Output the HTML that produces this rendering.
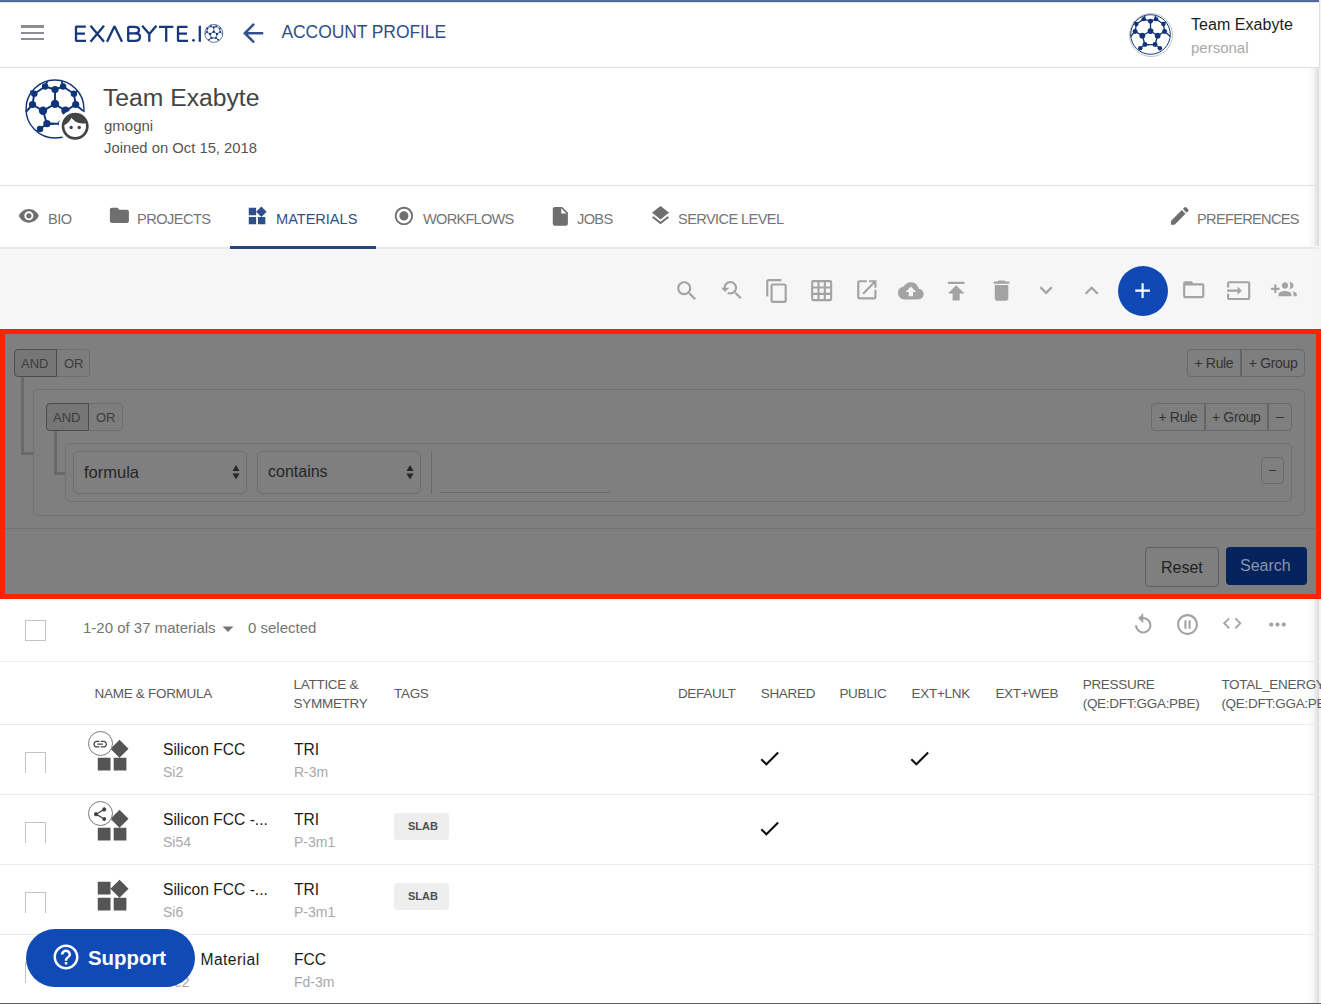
<!DOCTYPE html>
<html><head><meta charset="utf-8">
<style>
*{box-sizing:border-box;margin:0;padding:0}
html,body{width:1321px;height:1004px;overflow:hidden;background:#fff;font-family:"Liberation Sans",sans-serif;position:relative}
.a{position:absolute}
.t{position:absolute;white-space:nowrap;line-height:1}
svg.i{position:absolute;display:block;overflow:visible}
</style></head><body>
<svg width="0" height="0" style="position:absolute"><defs>
<g id="ball">
<g fill="none" stroke="#10347a" stroke-width="3.2" stroke-linecap="butt">
<path d="M50 17.5 L33.5 12.5 L15.5 24.5 L12.5 42.5 L30 53 L50 41.5 L67.5 53 L84.5 42.5 L81.5 24.5 L63.5 12.5 L50 17.5 L50 41.5"/>
<path d="M30 53 L36.5 74.5 L61 74.5 L67.5 53"/>
<path d="M36.5 74.5 L25 83.5 M61 74.5 L73 83.5 M12.5 42.5 L1.5 55 M84.5 42.5 L98.5 55"/>
<path d="M33.5 12.5 L37 4 M63.5 12.5 L61 4 M15.5 24.5 L9 19.5 M81.5 24.5 L88 19.5 M36.5 74.5 L48 74.5"/>
</g>
<g fill="#10347a">
<circle cx="50" cy="17.5" r="6"/><circle cx="33.5" cy="12.5" r="5.4"/><circle cx="63.5" cy="12.5" r="5.4"/>
<circle cx="15.5" cy="24.5" r="5.4"/><circle cx="81.5" cy="24.5" r="5.4"/>
<circle cx="12.5" cy="42.5" r="6"/><circle cx="84.5" cy="42.5" r="6"/>
<circle cx="50" cy="41.5" r="7"/><circle cx="30" cy="53" r="7"/><circle cx="67.5" cy="53" r="7"/>
<circle cx="36.5" cy="74.5" r="6"/><circle cx="61" cy="74.5" r="6"/>
<circle cx="25" cy="83.5" r="5.4"/><circle cx="73" cy="83.5" r="5.4"/>
</g>
<circle cx="50" cy="50" r="48.3" fill="none" stroke="#10347a" stroke-width="2.4"/>
</g>
<g id="ballS">
<g fill="none" stroke="#10347a" stroke-width="3.8" stroke-linecap="butt">
<path d="M50 17.5 L33.5 12.5 L15.5 24.5 L12.5 42.5 L30 53 L50 41.5 L67.5 53 L84.5 42.5 L81.5 24.5 L63.5 12.5 L50 17.5 L50 41.5"/>
<path d="M30 53 L36.5 74.5 L61 74.5 L67.5 53"/>
<path d="M36.5 74.5 L25 83.5 M61 74.5 L73 83.5 M12.5 42.5 L1.5 55 M84.5 42.5 L98.5 55"/>
<path d="M33.5 12.5 L37 4 M63.5 12.5 L61 4 M15.5 24.5 L9 19.5 M81.5 24.5 L88 19.5 M36.5 74.5 L48 74.5"/>
</g>
<g fill="#10347a">
<circle cx="50" cy="17.5" r="5.5"/><circle cx="33.5" cy="12.5" r="5"/><circle cx="63.5" cy="12.5" r="5"/>
<circle cx="15.5" cy="24.5" r="5"/><circle cx="81.5" cy="24.5" r="5"/>
<circle cx="12.5" cy="42.5" r="5.5"/><circle cx="84.5" cy="42.5" r="5.5"/>
<circle cx="50" cy="41.5" r="6.5"/><circle cx="30" cy="53" r="6.5"/><circle cx="67.5" cy="53" r="6.5"/>
<circle cx="36.5" cy="74.5" r="5.5"/><circle cx="61" cy="74.5" r="5.5"/>
<circle cx="25" cy="83.5" r="5"/><circle cx="73" cy="83.5" r="5"/>
</g>
<circle cx="50" cy="50" r="48.3" fill="none" stroke="#10347a" stroke-width="3.6"/>
</g>
</defs></svg>
<div class="a" style="left:0px;top:0px;width:1319px;height:1px;background:#57709b"></div>
<div class="a" style="left:0px;top:1px;width:1319px;height:1px;background:#4a6591"></div>
<div class="a" style="left:0px;top:2px;width:1319px;height:1px;background:#e2e6ee"></div>
<div class="a" style="left:0px;top:67px;width:1319px;height:1px;background:#dbdfe8"></div>
<div class="a" style="left:1319px;top:0px;width:2px;height:1004px;background:#f4f4f4"></div>
<div class="a" style="left:1319px;top:0px;width:1px;height:68px;background:#e0e0e0"></div>
<div class="a" style="left:21px;top:25px;width:23px;height:3px;background:#8a8d91"></div>
<div class="a" style="left:21px;top:32px;width:23px;height:2px;background:#8a8d91"></div>
<div class="a" style="left:21px;top:38px;width:23px;height:2px;background:#8a8d91"></div>
<svg class="i" style="left:70px;top:20px" width="160" height="28" viewBox="0 0 160 28">
<g fill="none" stroke="#17397b" stroke-width="2.3" stroke-linejoin="bevel" stroke-linecap="butt">
<path d="M15.8 6.6 H6 V20.8 H16 M6 13.6 H15"/>
<path d="M20.5 5.8 L34 21.8 M34 5.8 L20.5 21.8"/>
<path d="M37 21.8 L44.5 6.2 L52 21.8"/>
<path d="M58.2 6.8 V20.8 H64.8 C68.3 20.8 70 19 70 16.7 C70 14.4 68.3 13.4 64.8 13.4 H58.2 M64.3 13.4 C67.3 13.4 69 12.2 69 10 C69 7.8 67.3 6.8 64.3 6.8 H58.2"/>
<path d="M72.2 5.8 L79.3 14 L86.4 5.8 M79.3 14 V21.8"/>
<path d="M89 6.8 H103.3 M96.2 6.8 V21.8"/>
<path d="M117.5 6.8 H108 V20.8 H118 M108 13.6 H117"/>
<path d="M129.8 5.8 V21.8"/>
</g>
<circle cx="123.5" cy="20.3" r="1.4" fill="#17397b"/>
<g transform="translate(134.5,4.1) scale(0.186)"><use href="#ballS"/></g>
</svg>
<svg class="i" style="left:237.55px;top:17.75px" width="30.30" height="30.30" viewBox="0 0 24 24"><path fill="#33528d" d="M20 11H7.83l5.59-5.59L12 4l-8 8 8 8 1.41-1.41L7.83 13H20v-2z"/></svg>
<div class="t" style="left:281.5px;top:24px;font-size:17.5px;color:#2f4f8b;letter-spacing:-0.1px">ACCOUNT PROFILE</div>
<div class="a" style="left:1129px;top:13px;width:44px;height:44px;border-radius:50%;border:1px solid #c4c4c4;background:#fff"></div>
<svg class="i" style="left:1130.3px;top:13.8px" width="41" height="41" viewBox="0 0 100 100"><use href="#ball"/></svg>
<div class="t" style="left:1191px;top:17px;font-size:16px;color:#1c1c1c;letter-spacing:0.05px">Team Exabyte</div>
<div class="t" style="left:1191px;top:40px;font-size:15px;color:#a9a9a9;">personal</div>
<div class="a" style="left:1308px;top:68px;width:11px;height:936px;background:linear-gradient(to right,rgba(0,0,0,0),rgba(0,0,0,0.04) 50%,rgba(0,0,0,0.15))"></div>
<svg class="i" style="left:25px;top:79px" width="60" height="60" viewBox="0 0 100 100">
<defs><mask id="fm"><rect x="-5" y="-5" width="110" height="110" fill="#fff"/><circle cx="84" cy="79" r="28" fill="#000"/></mask></defs>
<g mask="url(#fm)"><use href="#ball"/></g></svg>
<svg class="i" style="left:59px;top:110.2px" width="32.4" height="32.4" viewBox="0 0 24 24"><circle cx="12" cy="12" r="9" fill="#fff"/><path fill="#444" d="M9 11.75c-.69 0-1.25.56-1.25 1.25s.56 1.25 1.25 1.25 1.25-.56 1.25-1.25-.56-1.25-1.25-1.25zm6 0c-.69 0-1.25.56-1.25 1.25s.56 1.25 1.25 1.25 1.25-.56 1.25-1.25-.56-1.25-1.25-1.25zM12 2C6.48 2 2 6.48 2 12s4.48 10 10 10 10-4.48 10-10S17.52 2 12 2zm0 18c-4.41 0-8-3.59-8-8 0-.29.02-.58.05-.86 2.36-1.05 4.23-2.98 5.21-5.37C11.07 8.33 14.05 10 17.42 10c.78 0 1.53-.09 2.25-.26.21.71.33 1.47.33 2.26 0 4.41-3.59 8-8 8z"/></svg>
<div class="t" style="left:103px;top:86px;font-size:24.7px;color:#444;">Team Exabyte</div>
<div class="t" style="left:104px;top:118px;font-size:15px;color:#555;">gmogni</div>
<div class="t" style="left:104px;top:141px;font-size:14.8px;color:#555;">Joined on Oct 15, 2018</div>
<div class="a" style="left:0px;top:185px;width:1319px;height:1px;background:#dcdfe8"></div>
<div class="a" style="left:0px;top:249px;width:1319px;height:81px;background:#f6f6f6"></div>
<div class="a" style="left:0px;top:246px;width:1319px;height:1px;background:#fafafa"></div>
<div class="a" style="left:0px;top:247px;width:1319px;height:2px;background:#e9e9e9"></div>
<div class="a" style="left:230px;top:249px;width:146px;height:1px;background:#fdfdfd"></div>
<div class="a" style="left:230px;top:246px;width:146px;height:3px;background:#244780"></div>
<svg class="i" style="left:18.30px;top:204.63px" width="21.71" height="21.71" viewBox="0 0 24 24"><path fill="#6f6f6f" d="M12 4.5C7 4.5 2.73 7.61 1 12c1.73 4.39 6 7.5 11 7.5s9.27-3.11 11-7.5c-1.73-4.39-6-7.5-11-7.5zM12 17c-2.76 0-5-2.24-5-5s2.24-5 5-5 5 2.24 5 5-2.24 5-5 5zm0-8c-1.66 0-3 1.34-3 3s1.34 3 3 3 3-1.34 3-3-1.34-3-3-3z"/></svg>
<div class="t" style="left:48px;top:212px;font-size:14.6px;color:#757575;letter-spacing:-0.55px">BIO</div>
<svg class="i" style="left:107.70px;top:204.20px" width="22.80" height="22.80" viewBox="0 0 24 24"><path fill="#6f6f6f" d="M10 4H4c-1.1 0-1.99.9-1.99 2L2 18c0 1.1.9 2 2 2h16c1.1 0 2-.9 2-2V8c0-1.1-.9-2-2-2h-8l-2-2z"/></svg>
<div class="t" style="left:137px;top:212px;font-size:14.6px;color:#757575;letter-spacing:-0.55px">PROJECTS</div>
<svg class="i" style="left:246.04px;top:204.84px" width="22.11" height="22.11" viewBox="0 0 24 24"><path fill="#2f4f8b" d="M13 13v8h8v-8h-8zM3 21h8v-8H3v8zM3 3v8h8V3H3zm13.66-1.31L11 7.34 16.66 13l5.66-5.66-5.66-5.65z"/></svg>
<div class="t" style="left:276px;top:212px;font-size:14.6px;color:#2f4f8b;letter-spacing:-0.03px">MATERIALS</div>
<svg class="i" style="left:393.48px;top:204.58px" width="21.84" height="21.84" viewBox="0 0 24 24"><path fill="#6f6f6f" d="M12 7c-2.76 0-5 2.24-5 5s2.24 5 5 5 5-2.24 5-5-2.24-5-5-5zm0-5C6.48 2 2 6.48 2 12s4.48 10 10 10 10-4.48 10-10S17.52 2 12 2zm0 18c-4.42 0-8-3.58-8-8s3.58-8 8-8 8 3.58 8 8-3.58 8-8 8z"/></svg>
<div class="t" style="left:423px;top:212px;font-size:14.6px;color:#757575;letter-spacing:-0.75px">WORKFLOWS</div>
<svg class="i" style="left:549.02px;top:204.51px" width="22.65" height="22.65" viewBox="0 0 24 24"><path fill="#6f6f6f" d="M6 2c-1.1 0-1.99.9-1.99 2L4 20c0 1.1.89 2 1.99 2H18c1.1 0 2-.9 2-2V8l-6-6H6zm7 7V3.5L18.5 9H13z"/></svg>
<div class="t" style="left:577px;top:212px;font-size:14.6px;color:#757575;letter-spacing:-0.65px">JOBS</div>
<svg class="i" style="left:648.72px;top:204.48px" width="23.07" height="23.07" viewBox="0 0 24 24"><path fill="#6f6f6f" d="M11.99 18.54l-7.37-5.73L3 14.07l9 7 9-7-1.63-1.27-7.38 5.74zM12 16l7.36-5.73L21 9l-9-7-9 7 1.63 1.27L12 16z"/></svg>
<div class="t" style="left:678px;top:212px;font-size:14.6px;color:#757575;letter-spacing:-0.6px">SERVICE LEVEL</div>
<svg class="i" style="left:1168.35px;top:203.76px" width="23.60" height="23.60" viewBox="0 0 24 24"><path fill="#6f6f6f" d="M3 17.25V21h3.75L17.81 9.94l-3.75-3.75L3 17.25zM20.71 7.04c.39-.39.39-1.02 0-1.41l-2.34-2.34c-.39-.39-1.02-.39-1.41 0l-1.83 1.83 3.75 3.75 1.83-1.83z"/></svg>
<div class="t" style="left:1197px;top:212px;font-size:14.6px;color:#757575;letter-spacing:-0.69px">PREFERENCES</div>
<svg class="i" style="left:673.78px;top:278.18px" width="25.80" height="25.80" viewBox="0 0 24 24"><path fill="#a3a3a3" d="M15.5 14h-.79l-.28-.27C15.41 12.59 16 11.11 16 9.5 16 5.91 13.09 3 9.5 3S3 5.91 3 9.5 5.91 16 9.5 16c1.61 0 3.09-.59 4.23-1.57l.27.28v.79l5 4.99L20.49 19l-4.99-5zm-6 0C7.01 14 5 11.99 5 9.5S7.01 5 9.5 5 14 7.01 14 9.5 11.99 14 9.5 14z"/></svg>
<svg class="i" style="left:718.74px;top:278.31px" width="24.72" height="24.72" viewBox="0 0 24 24"><path fill="#a3a3a3" d="M17.01 14h-.8l-.27-.27c.98-1.14 1.57-2.610 1.57-4.23 0-3.59-2.91-6.5-6.5-6.5s-6.5 3-6.5 6.5H2l3.84 4 4.16-4H6.51C6.51 7 8.53 5 11.01 5s4.5 2.01 4.5 4.5c0 2.48-2.02 4.5-4.5 4.5-.65 0-1.26-.14-1.82-.38L7.71 15.1c.97.57 2.09.9 3.3.9 1.61 0 3.08-.59 4.22-1.57l.27.27v.79l5.01 4.99L22 19l-4.99-5z"/></svg>
<svg class="i" style="left:763.63px;top:277.72px" width="26.02" height="26.02" viewBox="0 0 24 24"><path fill="#a3a3a3" d="M16 1H4c-1.1 0-2 .9-2 2v14h2V3h12V1zm3 4H8c-1.1 0-2 .9-2 2v14c0 1.1.9 2 2 2h11c1.1 0 2-.9 2-2V7c0-1.1-.9-2-2-2zm0 16H8V7h11v14z"/></svg>
<svg class="i" style="left:808.79px;top:278.29px" width="25.32" height="25.32" viewBox="0 0 24 24"><path fill="#a3a3a3" d="M20 2H4c-1.1 0-2 .9-2 2v16c0 1.1.9 2 2 2h16c1.1 0 2-.9 2-2V4c0-1.1-.9-2-2-2zM8 20H4v-4h4v4zm0-6H4v-4h4v4zm0-6H4V4h4v4zm6 12h-4v-4h4v4zm0-6h-4v-4h4v4zm0-6h-4V4h4v4zm6 12h-4v-4h4v4zm0-6h-4v-4h4v4zm0-6h-4V4h4v4z"/></svg>
<svg class="i" style="left:853.98px;top:277.18px" width="25.73" height="25.73" viewBox="0 0 24 24"><path fill="#a3a3a3" d="M19 19H5V5h7V3H5c-1.11 0-2 .9-2 2v14c0 1.1.89 2 2 2h14c1.1 0 2-.9 2-2v-7h-2v7zM14 3v2h3.59l-9.83 9.83 1.41 1.41L19 6.41V10h2V3h-7z"/></svg>
<svg class="i" style="left:898.40px;top:277.72px" width="25.70" height="25.70" viewBox="0 0 24 24"><path fill="#a3a3a3" d="M19.35 10.04C18.67 6.59 15.64 4 12 4 9.11 4 6.6 5.64 5.35 8.04 2.34 8.36 0 10.91 0 14c0 3.31 2.69 6 6 6h13c2.76 0 5-2.24 5-5 0-2.64-2.05-4.78-4.65-4.96zM14 13v4h-4v-4H7l5-5 5 5h-3z"/></svg>
<svg class="i" style="left:942.11px;top:276.69px" width="28.29" height="28.29" viewBox="0 0 24 24"><path fill="#a3a3a3" d="M5 4v2h14V4H5zm0 10h4v6h6v-6h4l-7-7-7 7z"/></svg>
<svg class="i" style="left:987.76px;top:277.11px" width="27.09" height="27.09" viewBox="0 0 24 24"><path fill="#a3a3a3" d="M6 19c0 1.1.9 2 2 2h8c1.1 0 2-.9 2-2V7H6v12zM19 4h-3.5l-1-1h-5l-1 1H5v2h14V4z"/></svg>
<svg class="i" style="left:1033.35px;top:276.62px" width="26.20" height="26.20" viewBox="0 0 24 24"><path fill="#a3a3a3" d="M16.59 8.59L12 13.17 7.41 8.59 6 10l6 6 6-6z"/></svg>
<svg class="i" style="left:1077.65px;top:276.87px" width="27.40" height="27.40" viewBox="0 0 24 24"><path fill="#a3a3a3" d="M12 8l-6 6 1.41 1.41L12 10.83l4.59 4.58L18 14z"/></svg>
<div class="a" style="left:1118px;top:265.5px;width:50px;height:50px;border-radius:50%;background:#1049b5"></div>
<svg class="i" style="left:1130.25px;top:277.75px" width="25.20" height="25.20" viewBox="0 0 24 24"><path fill="#fff" d="M19 13h-6v6h-2v-6H5v-2h6V5h2v6h6v2z"/></svg>
<svg class="i" style="left:1181.28px;top:277.26px" width="25.44" height="25.44" viewBox="0 0 24 24"><path fill="#a3a3a3" d="M20 6h-8l-2-2H4c-1.1 0-1.99.9-1.99 2L2 18c0 1.1.9 2 2 2h16c1.1 0 2-.9 2-2V8c0-1.1-.9-2-2-2zm0 12H4V8h16v10z"/></svg>
<svg class="i" style="left:1226.25px;top:278.34px" width="25.31" height="25.31" viewBox="0 0 24 24"><path fill="#a3a3a3" d="M21 3.01H3c-1.1 0-2 .9-2 2V9h2V4.99h18v14.03H3V15H1v4.01c0 1.1.9 1.98 2 1.98h18c1.1 0 2-.88 2-1.98v-14c0-1.11-.9-2-2-2zM11 16l4-4-4-4v3H1v2h10v3z"/></svg>
<svg class="i" style="left:1271.20px;top:276.62px" width="25.80" height="25.80" viewBox="0 0 24 24"><path fill="#a3a3a3" d="M8 10H5V7H3v3H0v2h3v3h2v-3h3v-2zm10 1c1.66 0 2.99-1.34 2.99-3S19.66 5 18 5c-.32 0-.63.05-.91.14.57.81.9 1.79.9 2.86s-.34 2.04-.9 2.86c.28.09.59.14.91.14zm-5 0c1.66 0 2.99-1.34 2.99-3S14.66 5 13 5c-1.66 0-3 1.34-3 3s1.34 3 3 3zm6.62 2.16c.83.73 1.38 1.66 1.38 2.84v2h3v-2c0-1.54-2.37-2.49-4.38-2.84zM13 13c-2 0-6 1-6 3v2h12v-2c0-2-4-3-6-3z"/></svg>
<div class="a" style="left:0px;top:329px;width:1321px;height:270px;background:#7f7f7f;border:5px solid #ff2200"></div>
<div class="a" style="left:14px;top:349px;width:76px;height:28px;border:1px solid #6e6e6e;border-radius:4px;background:#7d7d7d"></div>
<div class="a" style="left:14px;top:349px;width:43px;height:28px;border:1px solid #4c4c4c;border-radius:4px 0 0 4px;background:#767676"></div>
<div class="t" style="left:21px;top:356.5px;font-size:13px;color:#3c3c3c;">AND</div>
<div class="t" style="left:64px;top:356.5px;font-size:13px;color:#3c3c3c;">OR</div>
<div class="a" style="left:1187px;top:349px;width:118px;height:28px;border:1px solid #6a6a6a;border-radius:4px"></div>
<div class="a" style="left:1240px;top:349px;width:2px;height:28px;background:#666"></div>
<div class="t" style="left:1194.5px;top:356.3px;font-size:14px;color:#333;letter-spacing:-0.35px">+ Rule</div>
<div class="t" style="left:1248.8px;top:356.3px;font-size:14px;color:#333;letter-spacing:-0.35px">+ Group</div>
<div class="a" style="left:21px;top:377px;width:3px;height:78px;background:#696969;border-radius:0 0 0 5px"></div>
<div class="a" style="left:21px;top:452px;width:13px;height:3px;background:#696969"></div>
<div class="a" style="left:33px;top:389px;width:1272px;height:127px;border:1px solid #717171;border-radius:5px"></div>
<div class="a" style="left:46px;top:403px;width:77px;height:28px;border:1px solid #6e6e6e;border-radius:4px;background:#7d7d7d"></div>
<div class="a" style="left:46px;top:403px;width:43px;height:28px;border:1px solid #4c4c4c;border-radius:4px 0 0 4px;background:#767676"></div>
<div class="t" style="left:53px;top:410.5px;font-size:13px;color:#3c3c3c;">AND</div>
<div class="t" style="left:96px;top:410.5px;font-size:13px;color:#3c3c3c;">OR</div>
<div class="a" style="left:1151px;top:403px;width:141px;height:28px;border:1px solid #6a6a6a;border-radius:4px"></div>
<div class="a" style="left:1204px;top:403px;width:2px;height:28px;background:#666"></div>
<div class="a" style="left:1267px;top:403px;width:2px;height:28px;background:#666"></div>
<div class="t" style="left:1158.5px;top:410.3px;font-size:14px;color:#333;letter-spacing:-0.35px">+ Rule</div>
<div class="t" style="left:1212px;top:410.3px;font-size:14px;color:#333;letter-spacing:-0.35px">+ Group</div>
<div class="a" style="left:1276px;top:416.5px;width:7.5px;height:1.8px;background:#3a3a3a"></div>
<div class="a" style="left:54px;top:431px;width:3px;height:44px;background:#696969;border-radius:0 0 0 5px"></div>
<div class="a" style="left:54px;top:472px;width:12px;height:3px;background:#696969"></div>
<div class="a" style="left:65px;top:443px;width:1227px;height:59px;border:1px solid #717171;border-radius:5px"></div>
<div class="a" style="left:73px;top:451px;width:174px;height:43px;border:1px solid #6c6c6c;border-radius:5px"></div>
<div class="t" style="left:84px;top:464px;font-size:16.5px;color:#262626;">formula</div>
<svg class="i" style="left:231px;top:464px" width="10" height="17" viewBox="0 0 10 17"><path fill="#262626" d="M1.5 7 L5 1 L8.5 7 Z M1.5 9.5 L8.5 9.5 L5 15.5 Z"/></svg>
<div class="a" style="left:257px;top:451px;width:164px;height:43px;border:1px solid #6c6c6c;border-radius:5px"></div>
<div class="t" style="left:268px;top:464px;font-size:16px;color:#262626;">contains</div>
<svg class="i" style="left:405px;top:464px" width="10" height="17" viewBox="0 0 10 17"><path fill="#262626" d="M1.5 7 L5 1 L8.5 7 Z M1.5 9.5 L8.5 9.5 L5 15.5 Z"/></svg>
<div class="a" style="left:431px;top:451px;width:1px;height:43px;background:#6a6a6a"></div>
<div class="a" style="left:439px;top:492px;width:171px;height:1px;background:#6a6a6a"></div>
<div class="a" style="left:1261px;top:457px;width:23px;height:27px;border:1px solid #6a6a6a;border-radius:4px"></div>
<div class="a" style="left:1268.5px;top:469.5px;width:7.5px;height:1.8px;background:#3a3a3a"></div>
<div class="a" style="left:5px;top:528px;width:1311px;height:1px;background:#737373"></div>
<div class="a" style="left:1145px;top:547px;width:74px;height:40px;border:1px solid #606060;border-radius:4px"></div>
<div class="t" style="left:1161px;top:560px;font-size:16px;color:#222;">Reset</div>
<div class="a" style="left:1226px;top:547px;width:81px;height:38px;background:#04225b;border-radius:4px"></div>
<div class="t" style="left:1240px;top:558px;font-size:16px;color:#8a95ab;">Search</div>
<div class="a" style="left:25px;top:620px;width:21px;height:21px;border:1px solid #c4c4c4"></div>
<div class="t" style="left:83px;top:620px;font-size:15px;color:#757575;">1-20 of 37 materials</div>
<svg class="i" style="left:222px;top:626px" width="12" height="6" viewBox="0 0 12 6"><path fill="#757575" d="M0.5 0.5 H11.5 L6 6 Z"/></svg>
<div class="t" style="left:248px;top:620px;font-size:15px;color:#757575;">0 selected</div>
<svg class="i" style="left:1131px;top:612px" width="24.5" height="24.5" viewBox="0 0 24 24"><path fill="#a3a3a3" d="M12 5V1L7 6l5 5V7c3.31 0 6 2.69 6 6s-2.69 6-6 6-6-2.69-6-6H4c0 4.42 3.58 8 8 8s8-3.58 8-8-3.58-8-8-8z"/></svg>
<svg class="i" style="left:1175px;top:612px" width="25" height="25" viewBox="0 0 24 24"><path fill="#a3a3a3" d="M9 16h2V8H9v8zm3-14C6.48 2 2 6.48 2 12s4.48 10 10 10 10-4.48 10-10S17.52 2 12 2zm0 18c-4.41 0-8-3.59-8-8s3.59-8 8-8 8 3.59 8 8-3.59 8-8 8zm1-4h2V8h-2v8z"/></svg>
<svg class="i" style="left:1221px;top:612px" width="22.5" height="22.5" viewBox="0 0 24 24"><path fill="#a3a3a3" d="M9.4 16.6L4.8 12l4.6-4.6L8 6l-6 6 6 6 1.4-1.4zm5.2 0l4.6-4.6-4.6-4.6L16 6l6 6-6 6-1.4-1.4z"/></svg>
<svg class="i" style="left:1265px;top:612px" width="25" height="25" viewBox="0 0 24 24"><path fill="#a3a3a3" d="M6 10c-1.1 0-2 .9-2 2s.9 2 2 2 2-.9 2-2-.9-2-2-2zm12 0c-1.1 0-2 .9-2 2s.9 2 2 2 2-.9 2-2-.9-2-2-2zm-6 0c-1.1 0-2 .9-2 2s.9 2 2 2 2-.9 2-2-.9-2-2-2z"/></svg>
<div class="a" style="left:0px;top:661px;width:1319px;height:1px;background:#eeeeee"></div>
<div class="t" style="left:94.6px;top:686.5px;font-size:13.5px;color:#5a5a5a;letter-spacing:-0.3px">NAME &amp; FORMULA</div>
<div class="t" style="left:293.6px;top:677.5px;font-size:13.5px;color:#5a5a5a;letter-spacing:-0.3px">LATTICE &amp;</div>
<div class="t" style="left:293.6px;top:696.5px;font-size:13.5px;color:#5a5a5a;letter-spacing:-0.3px">SYMMETRY</div>
<div class="t" style="left:394px;top:686.5px;font-size:13.5px;color:#5a5a5a;letter-spacing:-0.3px">TAGS</div>
<div class="t" style="left:677.9px;top:686.5px;font-size:13.5px;color:#5a5a5a;letter-spacing:-0.3px">DEFAULT</div>
<div class="t" style="left:760.7px;top:686.5px;font-size:13.5px;color:#5a5a5a;letter-spacing:-0.3px">SHARED</div>
<div class="t" style="left:839.4px;top:686.5px;font-size:13.5px;color:#5a5a5a;letter-spacing:-0.3px">PUBLIC</div>
<div class="t" style="left:911.6px;top:686.5px;font-size:13.5px;color:#5a5a5a;letter-spacing:-0.3px">EXT+LNK</div>
<div class="t" style="left:995.4px;top:686.5px;font-size:13.5px;color:#5a5a5a;letter-spacing:-0.3px">EXT+WEB</div>
<div class="t" style="left:1082.7px;top:677.5px;font-size:13.5px;color:#5a5a5a;letter-spacing:-0.3px">PRESSURE</div>
<div class="t" style="left:1082.7px;top:696.5px;font-size:13.5px;color:#5a5a5a;letter-spacing:-0.3px">(QE:DFT:GGA:PBE)</div>
<div class="t" style="left:1221.4px;top:677.5px;font-size:13.5px;color:#5a5a5a;letter-spacing:-0.3px">TOTAL_ENERGY</div>
<div class="t" style="left:1221.4px;top:696.5px;font-size:13.5px;color:#5a5a5a;letter-spacing:-0.3px">(QE:DFT:GGA:PBE)</div>
<div class="a" style="left:0px;top:724px;width:1319px;height:1px;background:#ebebeb"></div>
<div class="a" style="left:25px;top:752px;width:21px;height:21px;border:1px solid #c4c4c4;border-bottom:none"></div>
<svg class="i" style="left:93.3px;top:736.8px" width="38.2" height="38.2" viewBox="0 0 24 24"><path fill="#555" d="M13 13v8h8v-8h-8zM3 21h8v-8H3v8zM16.66 1.69L11 7.34 16.66 13l5.66-5.66-5.66-5.65z"/></svg>
<div class="a" style="left:88px;top:731px;width:25px;height:25px;border-radius:50%;border:1px solid #7a7a7a;background:#fff"></div>
<svg class="i" style="left:91.9px;top:735.6px" width="16.3" height="16.3" viewBox="0 0 24 24"><path fill="#444" d="M3.9 12c0-1.71 1.39-3.1 3.1-3.1h4V7H7c-2.76 0-5 2.24-5 5s2.24 5 5 5h4v-1.9H7c-1.71 0-3.1-1.39-3.1-3.1zM8 13h8v-2H8v2zm9-6h-4v1.9h4c1.71 0 3.1 1.39 3.1 3.1s-1.39 3.1-3.1 3.1h-4V17h4c2.76 0 5-2.24 5-5s-2.24-5-5-5z"/></svg>
<div class="t" style="left:163px;top:742px;font-size:15.6px;color:#1c1c1c;">Silicon FCC</div>
<div class="t" style="left:163px;top:765px;font-size:14px;color:#a8a8a8;">Si2</div>
<div class="t" style="left:294px;top:742px;font-size:15.6px;color:#1c1c1c;">TRI</div>
<div class="t" style="left:294px;top:765px;font-size:14px;color:#a8a8a8;">R-3m</div>
<svg class="i" style="left:757px;top:746px" width="25" height="25" viewBox="0 0 24 24"><path fill="#111" d="M9 16.17L4.83 12l-1.42 1.41L9 19 21 7l-1.41-1.41z"/></svg>
<svg class="i" style="left:907px;top:746px" width="25" height="25" viewBox="0 0 24 24"><path fill="#111" d="M9 16.17L4.83 12l-1.42 1.41L9 19 21 7l-1.41-1.41z"/></svg>
<div class="a" style="left:0px;top:794px;width:1319px;height:1px;background:#ebebeb"></div>
<div class="a" style="left:25px;top:822px;width:21px;height:21px;border:1px solid #c4c4c4;border-bottom:none"></div>
<svg class="i" style="left:93.3px;top:806.8px" width="38.2" height="38.2" viewBox="0 0 24 24"><path fill="#555" d="M13 13v8h8v-8h-8zM3 21h8v-8H3v8zM16.66 1.69L11 7.34 16.66 13l5.66-5.66-5.66-5.65z"/></svg>
<div class="a" style="left:88px;top:801px;width:25px;height:25px;border-radius:50%;border:1px solid #7a7a7a;background:#fff"></div>
<svg class="i" style="left:91.9px;top:805.6px" width="16.3" height="16.3" viewBox="0 0 24 24"><path fill="#444" d="M18 16.08c-.76 0-1.44.3-1.96.77L8.91 12.7c.05-.23.09-.46.09-.7s-.04-.47-.09-.7l7.05-4.11c.54.5 1.25.81 2.04.81 1.66 0 3-1.34 3-3s-1.34-3-3-3-3 1.34-3 3c0 .24.04.47.09.7L8.04 9.81C7.5 9.31 6.79 9 6 9c-1.66 0-3 1.34-3 3s1.34 3 3 3c.79 0 1.5-.31 2.04-.81l7.12 4.16c-.05.21-.08.43-.08.65 0 1.61 1.31 2.92 2.92 2.92 1.61 0 2.92-1.31 2.92-2.92s-1.31-2.92-2.92-2.92z"/></svg>
<div class="t" style="left:163px;top:812px;font-size:15.6px;color:#1c1c1c;">Silicon FCC -...</div>
<div class="t" style="left:163px;top:835px;font-size:14px;color:#a8a8a8;">Si54</div>
<div class="t" style="left:294px;top:812px;font-size:15.6px;color:#1c1c1c;">TRI</div>
<div class="t" style="left:294px;top:835px;font-size:14px;color:#a8a8a8;">P-3m1</div>
<div class="a" style="left:394px;top:813px;width:55px;height:27px;background:#eeeeee;border-radius:3px"></div>
<div class="t" style="left:408px;top:821px;font-size:11px;color:#505050;font-weight:bold">SLAB</div>
<svg class="i" style="left:757px;top:816px" width="25" height="25" viewBox="0 0 24 24"><path fill="#111" d="M9 16.17L4.83 12l-1.42 1.41L9 19 21 7l-1.41-1.41z"/></svg>
<div class="a" style="left:0px;top:864px;width:1319px;height:1px;background:#ebebeb"></div>
<div class="a" style="left:25px;top:892px;width:21px;height:21px;border:1px solid #c4c4c4;border-bottom:none"></div>
<svg class="i" style="left:93.3px;top:876.8px" width="38.2" height="38.2" viewBox="0 0 24 24"><path fill="#555" d="M13 13v8h8v-8h-8zM3 21h8v-8H3v8zM3 3v8h8V3H3zm13.66-1.31L11 7.34 16.66 13l5.66-5.66-5.66-5.65z"/></svg>
<div class="t" style="left:163px;top:882px;font-size:15.6px;color:#1c1c1c;">Silicon FCC -...</div>
<div class="t" style="left:163px;top:905px;font-size:14px;color:#a8a8a8;">Si6</div>
<div class="t" style="left:294px;top:882px;font-size:15.6px;color:#1c1c1c;">TRI</div>
<div class="t" style="left:294px;top:905px;font-size:14px;color:#a8a8a8;">P-3m1</div>
<div class="a" style="left:394px;top:883px;width:55px;height:27px;background:#eeeeee;border-radius:3px"></div>
<div class="t" style="left:408px;top:891px;font-size:11px;color:#505050;font-weight:bold">SLAB</div>
<div class="a" style="left:0px;top:934px;width:1319px;height:1px;background:#ebebeb"></div>
<div class="a" style="left:25px;top:962px;width:21px;height:21px;border:1px solid #c4c4c4;border-bottom:none"></div>
<svg class="i" style="left:93.3px;top:946.8px" width="38.2" height="38.2" viewBox="0 0 24 24"><path fill="#555" d="M13 13v8h8v-8h-8zM3 21h8v-8H3v8zM3 3v8h8V3H3zm13.66-1.31L11 7.34 16.66 13l5.66-5.66-5.66-5.65z"/></svg>
<div class="t" style="left:163px;top:952px;font-size:15.6px;color:#1c1c1c;">New</div>
<div class="t" style="left:200.5px;top:952px;font-size:15.6px;color:#1c1c1c;letter-spacing:0.45px">Material</div>
<div class="t" style="left:163px;top:975px;font-size:14px;color:#a8a8a8;">Ge2</div>
<div class="t" style="left:294px;top:952px;font-size:15.6px;color:#1c1c1c;">FCC</div>
<div class="t" style="left:294px;top:975px;font-size:14px;color:#a8a8a8;">Fd-3m</div>
<div class="a" style="left:0px;top:1004px;width:1319px;height:1px;background:#ebebeb"></div>
<div class="a" style="left:0px;top:1003px;width:1321px;height:1px;background:#5c5c5c"></div>
<div class="a" style="left:26px;top:929px;width:169px;height:58px;border-radius:29px;background:#0f4ab5"></div>
<svg class="i" style="left:51.4px;top:942.4px" width="30" height="30" viewBox="0 0 24 24"><path fill="#fff" d="M11 18h2v-2h-2v2zm1-16C6.48 2 2 6.48 2 12s4.48 10 10 10 10-4.48 10-10S17.52 2 12 2zm0 18c-4.41 0-8-3.59-8-8s3.59-8 8-8 8 3.59 8 8-3.59 8-8 8zm0-14c-2.21 0-4 1.79-4 4h2c0-1.1.9-2 2-2s2 .9 2 2c0 2-3 1.75-3 5h2c0-2.250 3-2.5 3-5 0-2.21-1.79-4-4-4z"/></svg>
<div class="t" style="left:88px;top:948px;font-size:20.4px;color:#fff;font-weight:bold">Support</div>
</body></html>
